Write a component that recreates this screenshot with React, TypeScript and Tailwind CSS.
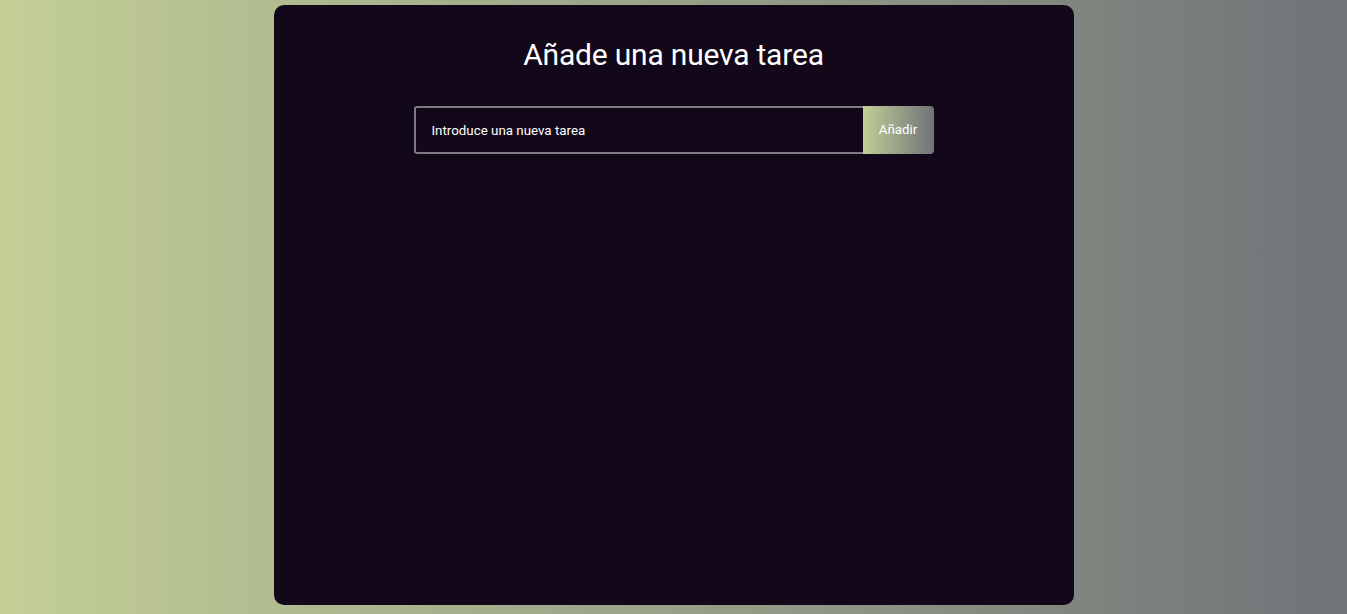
export default function App() {
  return (
    <div className="flex min-h-screen w-full justify-center bg-gradient-to-r from-[#c3cf95] to-[#707378] py-[5px] font-['Roboto',sans-serif]">
      <div className="flex h-[600px] w-[800px] flex-col items-center rounded-[10px] bg-[#130819] pt-[32px]">
        <h1 className="text-[30px] leading-[36px] tracking-[-0.2px] text-white">Añade una nueva tarea</h1>
        <form className="mt-[33px] flex w-[520px]" onSubmit={(e) => e.preventDefault()}>
          <input
            type="text"
            placeholder="Introduce una nueva tarea"
            className="h-[48px] flex-1 rounded-l-[3px] border-2 border-r-0 border-[#7c7c82] bg-transparent px-4 text-[13.333px] text-white outline-none placeholder:text-white"
          />
          <button
            type="submit"
            className="h-[48px] w-[71px] rounded-r-[4px] bg-gradient-to-r from-[#c3cf95] to-[#707378] text-[13.333px] text-white"
          >
            Añadir
          </button>
        </form>
      </div>
    </div>
  )
}
